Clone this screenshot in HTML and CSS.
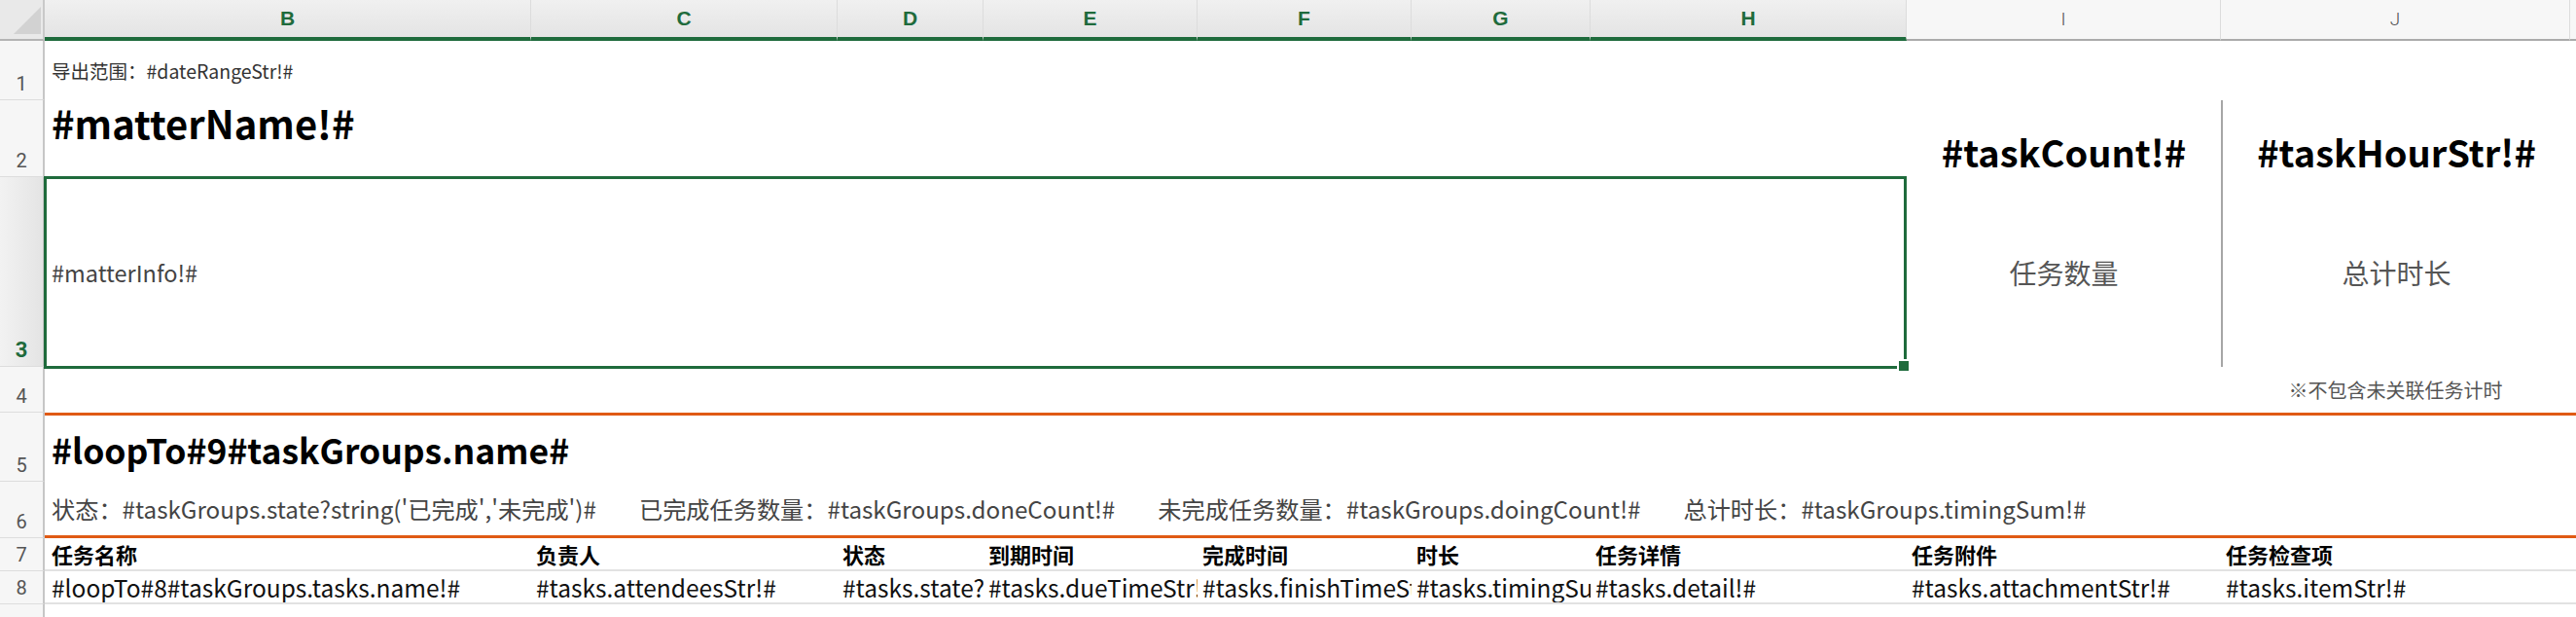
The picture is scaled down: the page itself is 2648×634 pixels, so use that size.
FILE: index.html
```html
<!DOCTYPE html>
<html lang="zh-CN">
<head>
<meta charset="utf-8">
<title>导出模板</title>
<link rel="stylesheet" href="styles.css">
</head>
<body>
<div class="sheet">
  <div class="corner"><span class="tri"></span></div>
  <div class="ch sel c-b">B</div>
  <div class="ch sel c-c">C</div>
  <div class="ch sel c-d">D</div>
  <div class="ch sel c-e">E</div>
  <div class="ch sel c-f">F</div>
  <div class="ch sel c-g">G</div>
  <div class="ch sel c-h">H</div>
  <div class="ch c-i">I</div>
  <div class="ch c-j">J</div>
  <div class="ch c-k"></div>

  <div class="rh r-1">1</div>
  <div class="rh r-2">2</div>
  <div class="rh rh-sel r-3">3</div>
  <div class="rh r-4">4</div>
  <div class="rh r-5">5</div>
  <div class="rh r-6">6</div>
  <div class="rh r-7">7</div>
  <div class="rh r-8">8</div>
  <div class="rh r-9"></div>

  <div class="cell r-1 span-bh t-range">导出范围：#dateRangeStr!#</div>

  <div class="cell r-2 span-bh t-title">#matterName!#</div>
  <div class="cell r-2 c-i center t-big">#taskCount!#</div>
  <div class="cell r-2 c-j center divider t-big">#taskHourStr!#</div>

  <div class="cell r-3 span-bh merged t-info">#matterInfo!#<span class="handle"></span></div>
  <div class="cell r-3 c-i center t-stat">任务数量</div>
  <div class="cell r-3 c-j center divider t-stat">总计时长</div>

  <div class="cell r-4 c-j center t-note">※不包含未关联任务计时</div>

  <div class="cell r-5 span-all rule-top t-group">#loopTo#9#taskGroups.name#</div>

  <div class="cell r-6 span-all rule-bottom t-sum">
    <span class="sum">状态：#taskGroups.state?string('已完成','未完成')#</span>
    <span class="sum">已完成任务数量：#taskGroups.doneCount!#</span>
    <span class="sum">未完成任务数量：#taskGroups.doingCount!#</span>
    <span class="sum">总计时长：#taskGroups.timingSum!#</span>
  </div>

  <div class="cell r-7 c-b th first">任务名称</div>
  <div class="cell r-7 c-c th">负责人</div>
  <div class="cell r-7 c-d th">状态</div>
  <div class="cell r-7 c-e th">到期时间</div>
  <div class="cell r-7 c-f th">完成时间</div>
  <div class="cell r-7 c-g th">时长</div>
  <div class="cell r-7 c-h th">任务详情</div>
  <div class="cell r-7 c-i th">任务附件</div>
  <div class="cell r-7 c-j th">任务检查项</div>
  <div class="cell r-7 c-k th"></div>

  <div class="cell r-8 c-b td first">#loopTo#8#taskGroups.tasks.name!#</div>
  <div class="cell r-8 c-c td">#tasks.attendeesStr!#</div>
  <div class="cell r-8 c-d td">#tasks.state?string('已完成','未完成')#</div>
  <div class="cell r-8 c-e td">#tasks.dueTimeStr!#</div>
  <div class="cell r-8 c-f td">#tasks.finishTimeStr!#</div>
  <div class="cell r-8 c-g td">#tasks.timingSum!#</div>
  <div class="cell r-8 c-h td">#tasks.detail!#</div>
  <div class="cell r-8 c-i td">#tasks.attachmentStr!#</div>
  <div class="cell r-8 c-j td">#tasks.itemStr!#</div>
  <div class="cell r-8 c-k td"></div>
</div>
</body>
</html>
```

FILE: styles.css
```css
html, body {
  margin: 0;
  padding: 0;
  background: #ffffff;
}

body {
  width: 2648px;
  height: 634px;
  overflow: hidden;
  font-family: "Noto Sans CJK SC", sans-serif;
  color: #111;
}

.sheet {
  display: grid;
  grid-template-columns: 46px 500px 315px 150px 220px 220px 184px 325px 323px 359px 1fr;
  grid-template-rows: 42px 61px 79px 195px 47px 71px 58px 34px 34px 1fr;
  height: 634px;
}

/* column placement */
.c-b { grid-column: 2; }
.c-c { grid-column: 3; }
.c-d { grid-column: 4; }
.c-e { grid-column: 5; }
.c-f { grid-column: 6; }
.c-g { grid-column: 7; }
.c-h { grid-column: 8; }
.c-i { grid-column: 9; }
.c-j { grid-column: 10; }
.c-k { grid-column: 11; }
.span-bh { grid-column: 2 / 9; }
.span-all { grid-column: 2 / 12; }

/* row placement */
.r-1 { grid-row: 2; }
.r-2 { grid-row: 3; }
.r-3 { grid-row: 4; }
.r-4 { grid-row: 5; }
.r-5 { grid-row: 6; }
.r-6 { grid-row: 7; }
.r-7 { grid-row: 8; }
.r-8 { grid-row: 9; }
.r-9 { grid-row: 10; }

/* corner + headers */
.corner {
  grid-row: 1;
  grid-column: 1;
  background: #e9e9e9;
  border-right: 2px solid #c9c9c9;
  border-bottom: 2px solid #b4b4b4;
  box-sizing: border-box;
  position: relative;
}

.tri {
  position: absolute;
  left: 14px;
  top: 7px;
  width: 28px;
  height: 28px;
  background: #d2d2d2;
  clip-path: polygon(100% 0, 100% 100%, 0 100%);
}

.ch {
  grid-row: 1;
  box-sizing: border-box;
  display: flex;
  align-items: center;
  justify-content: center;
  background: #f7f7f7;
  border-right: 1px solid #dcdcdc;
  border-bottom: 2px solid #ababab;
  font-family: Roboto, "Liberation Sans", sans-serif;
  font-weight: 300;
  font-size: 19px;
  color: #555;
  padding-bottom: 2px;
}

.ch.sel {
  background: linear-gradient(#f0f0f0, #e4e4e4);
  border-bottom: 4px solid #1f6b3c;
  font-family: "Liberation Sans", sans-serif;
  font-weight: 700;
  font-size: 21px;
  color: #1f6b3c;
  padding-bottom: 0;
}

.ch.c-k {
  border-right: none;
}

.rh {
  grid-column: 1;
  box-sizing: border-box;
  background: #f6f6f6;
  border-right: 2px solid #c6c6c6;
  border-bottom: 1px solid #dddddd;
  display: flex;
  align-items: flex-end;
  justify-content: center;
  padding-bottom: 4px;
  font-family: Roboto, "Liberation Sans", sans-serif;
  font-size: 20px;
  line-height: 24px;
  color: #555;
}

.rh-sel {
  background: linear-gradient(90deg, #f2f2f2, #e4e4e4);
  color: #1f6b3c;
  font-weight: 700;
  font-size: 22px;
}

.rh.r-9 {
  border-bottom: none;
}

/* cells */
.cell {
  box-sizing: border-box;
  display: flex;
  align-items: center;
  padding: 0 5px;
  white-space: nowrap;
  min-width: 0;
}

.center {
  justify-content: center;
}

.divider {
  border-left: 2px solid #a6a6a6;
}

.t-range {
  padding-left: 7px;
  font-size: 19.5px;
  line-height: 24px;
  color: #333;
}

.t-title {
  align-items: flex-start;
  padding-left: 7px;
  padding-top: 3px;
  font-size: 40px;
  line-height: 40px;
  font-weight: 700;
  color: #000;
}

.t-big {
  align-items: flex-end;
  padding-bottom: 6px;
  font-size: 38px;
  line-height: 40px;
  font-weight: 700;
  color: #000;
}

.merged {
  position: relative;
  border: 3px solid #1f6b3c;
  margin: -1px 0 -2px -1px;
  padding-left: 5px;
}

.handle {
  position: absolute;
  right: -5px;
  bottom: -5px;
  width: 10px;
  height: 10px;
  background: #1f6b3c;
  box-shadow: -2px -2px 0 #ffffff;
}

.t-info {
  font-size: 23.5px;
  color: #444;
}

.t-stat {
  font-size: 28px;
  color: #555;
}

.t-note {
  font-size: 20px;
  line-height: 26px;
  color: #555;
}

.t-group {
  border-top: 3px solid #e05a14;
  padding-left: 7px;
  font-size: 35.5px;
  font-weight: 700;
  color: #000;
}

.t-sum {
  border-bottom: 3px solid #e05a14;
  padding-left: 7px;
  font-size: 24.2px;
  color: #444;
  gap: 44px;
}

.th {
  border-bottom: 2px solid #e2e2e2;
  font-size: 22px;
  line-height: 28px;
  font-weight: 700;
  color: #000;
}

.td {
  overflow: hidden;
  border-bottom: 2px solid #e2e2e2;
  font-size: 24.5px;
  color: #111;
}

.first {
  padding-left: 7px;
}
```
